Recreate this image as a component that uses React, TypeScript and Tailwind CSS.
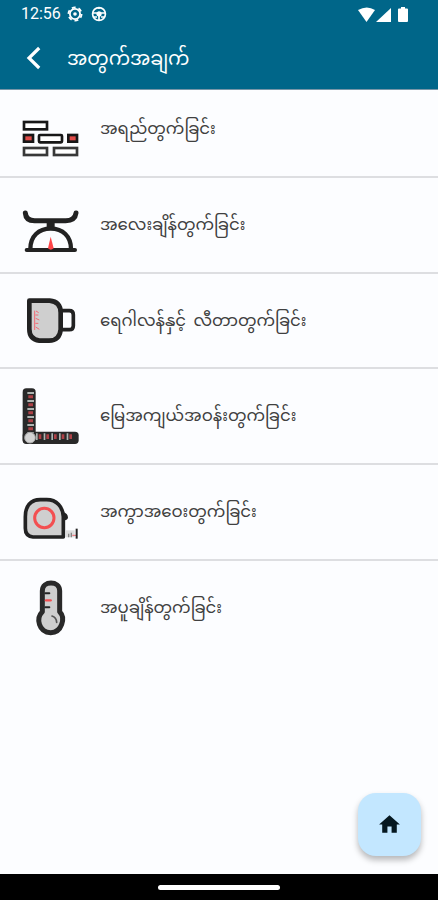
import React from "react"
import { MdHome } from "react-icons/md"

type RowType = {
  id: number
  label: string
  icon: React.ReactNode
  iconOffset: string
}

const BricksIcon = () => (
  <svg viewBox="0 0 240 210" className="w-20 h-[70px]" fill="#fff" stroke="#171717" strokeWidth="8">
    <rect x="42" y="51" width="69" height="22" />
    <rect x="42" y="90" width="27" height="20" fill="#e04b48" />
    <rect x="87" y="90" width="69" height="22" rx="3" />
    <rect x="175" y="90" width="26" height="20" fill="#e04b48" />
    <rect x="42" y="129" width="69" height="21" stroke="#383838" />
    <rect x="132" y="129" width="69" height="21" stroke="#383838" />
  </svg>
)

const ScaleIcon = () => (
  <svg viewBox="0 0 240 210" className="w-20 h-[70px]" fill="none" stroke="#222" strokeWidth="15" strokeLinecap="round" strokeLinejoin="round">
    <path d="M46 54C47 70 58 77 74 77H167C185 77 196 70 198 54" />
    <path d="M122 79V96" strokeWidth="24" strokeLinecap="butt" />
    <path d="M61 162C61 123 86 101 122 101S183 123 183 162" strokeWidth="13" />
    <path d="M50 165H195" strokeWidth="12" />
    <path d="M122 125L131 160Q122 168 114 160Z" fill="#ff4548" stroke="none" />
  </svg>
)

const CupIcon = () => (
  <svg viewBox="0 0 240 210" className="w-20 h-[70px]" fill="none" stroke="#222" strokeLinejoin="round">
    <path d="M149 77H178Q190 77 190 89V122Q190 134 178 134H149" strokeWidth="11" />
    <path d="M58 47H119Q152 50 152 83V133Q149 167 117 167H88Q58 163 58 132Z" fill="#cfcfcf" strokeWidth="14" />
    <path d="M74 77V135M78 78L86 83M76 90H85M77 100L88 105M76 115H85M77 126L88 133" stroke="#f26a74" strokeWidth="3" />
  </svg>
)

const RulerIcon = () => (
  <svg viewBox="0 0 240 210" className="w-20 h-[70px]" fill="none">
    <rect x="38" y="25" width="39" height="165" rx="11" fill="#292929" />
    <rect x="38" y="155" width="168" height="37" rx="11" fill="#292929" />
    <path d="M62 36V158" stroke="#aeb4b1" strokeWidth="20" strokeDasharray="6 18" />
    <path d="M62 46V155" stroke="#ad4146" strokeWidth="14" strokeDasharray="9 15" />
    <path d="M78 170H190" stroke="#aeb4b1" strokeWidth="20" strokeDasharray="5 18" />
    <path d="M86 170H190" stroke="#ad4146" strokeWidth="14" strokeDasharray="8 15" />
    <circle cx="60" cy="173" r="16" fill="#d3d3d3" stroke="#a6a6a6" strokeWidth="3" />
  </svg>
)

const TapeIcon = () => (
  <svg viewBox="0 0 240 210" className="w-20 h-[70px]" fill="none">
    <path d="M158 84Q174 88 174 101Q172 109 160 109Z" fill="#222" />
    <path d="M46 98C46 66 61 47 91 47H110C140 47 159 69 160 98V159H69Q46 157 46 133Z" fill="#cfcfcf" stroke="#222" strokeWidth="11" strokeLinejoin="round" />
    <circle cx="103" cy="102" r="29" stroke="#f34f51" strokeWidth="9" />
    <path d="M168 139H194V160H168Z" fill="#ddd" />
    <path d="M176 149V160M184 146V160" stroke="#858585" strokeWidth="4" />
    <path d="M187 154H198" stroke="#f26a74" strokeWidth="3" />
    <path d="M200 134V164" stroke="#222" strokeWidth="6" />
  </svg>
)

const ThermometerIcon = () => (
  <svg viewBox="0 0 240 210" className="w-20 h-[70px]" fill="none" strokeLinecap="round">
    <path d="M97 62C97 31 149 31 149 62V125C167 143 156 187 122 188C86 187 77 145 97 125Z" fill="#cecece" stroke="#292929" strokeWidth="15" strokeLinejoin="round" />
    <path d="M106 70H118M106 112H118" stroke="#252525" strokeWidth="6" />
    <path d="M108 91H122" stroke="#f34f51" strokeWidth="7" />
    <path d="M126 138Q139 142 140 157" stroke="#555" strokeWidth="5" />
  </svg>
)

const rows: RowType[] = [
  { id: 1, label: "အရည်တွက်ခြင်း", icon: <BricksIcon />, iconOffset: "mt-[23px]" },
  { id: 2, label: "အလေးချိန်တွက်ခြင်း", icon: <ScaleIcon />, iconOffset: "mt-[17px]" },
  { id: 3, label: "ရေဂါလန်နှင့် လီတာတွက်ခြင်း", icon: <CupIcon />, iconOffset: "mt-[11px]" },
  { id: 4, label: "မြေအကျယ်အဝန်းတွက်ခြင်း", icon: <RulerIcon />, iconOffset: "mt-[11px]" },
  { id: 5, label: "အကွာအဝေးတွက်ခြင်း", icon: <TapeIcon />, iconOffset: "mt-[19px]" },
  { id: 6, label: "အပူချိန်တွက်ခြင်း", icon: <ThermometerIcon />, iconOffset: "mt-[9px]" },
]

const StatusBar = () => (
  <div className="h-7 flex items-center pl-[21px] pr-[28px] text-white">
    <span className="font-['Roboto',sans-serif] text-[16px] leading-none w-[39px] whitespace-nowrap">12:56</span>
    <svg viewBox="0 0 16 16" className="size-4 ml-[7px]" fill="none" stroke="currentColor">
      <circle cx="8" cy="8" r="5.1" strokeWidth="1.8" />
      <circle cx="8" cy="8" r="6.6" strokeWidth="1.8" strokeDasharray="3.9 3.01" />
      <circle cx="8" cy="8" r="1.8" fill="currentColor" stroke="none" />
    </svg>
    <svg viewBox="0 0 16 16" className="size-4 ml-[8px]" fill="none" stroke="currentColor" strokeWidth="1.7">
      <circle cx="8" cy="8" r="6.4" />
      <path d="M2 7H14M8 8V14M3 11H6M10 11H13M8 1V3" />
      <circle cx="8" cy="8" r="1.8" fill="currentColor" />
    </svg>
    <svg viewBox="0 0 52 17" className="w-[52px] h-[17px] ml-auto" fill="currentColor">
      <path d="M0 4Q9 -1 17 4L8.5 16Z" />
      <path d="M33 2V16H18Z" />
      <path d="M43 1H47V2.5H49Q50 2.5 50 3.5V15Q50 16 49 16H41Q40 16 40 15V3.5Q40 2.5 41 2.5H43Z" />
    </svg>
  </div>
)

const App: React.FC = () => {
  return (
    <main className="relative w-full h-[900px] flex flex-col bg-[#fcfdff] overflow-hidden font-['Noto_Sans_Myanmar','Padauk','Noto_Sans',sans-serif]">
      <header className="h-[90px] shrink-0 bg-[#006689] border-b border-[#7896a8] text-white">
        <StatusBar />
        <div className="h-[60px] flex items-center pl-[26px]">
          <svg viewBox="0 0 16 24" className="w-4 h-6" fill="none" stroke="currentColor" strokeWidth="3.2">
            <path d="M13.2 2L3 12L13.2 22" />
          </svg>
          <h1 className="ml-[25px] pt-[6px] text-[19px] leading-[60px] whitespace-nowrap">အတွက်အချက်</h1>
        </div>
      </header>

      <ul className="flex-1 -mt-2 overflow-hidden pointer-events-none">
        {rows.map((row) => (
          <li key={row.id} className="h-[95.8px] flex items-start pl-[10px] border-b-2 border-[#dddee1] last:border-b-0">
            <div className={`shrink-0 ${row.iconOffset}`}>{row.icon}</div>
            <span className="ml-[10px] mt-[32px] text-[16.5px] leading-8 [word-spacing:3px] whitespace-nowrap text-[#404040]">
              {row.label}
            </span>
          </li>
        ))}
      </ul>

      <footer className="h-[26px] shrink-0 bg-black flex items-center justify-center">
        <div className="w-[122px] h-[5px] rounded-full bg-white" />
      </footer>

      <button
        aria-label="Home"
        className="absolute right-[17px] bottom-[44px] w-[63px] h-[63px] rounded-[18px] bg-[#c3e7ff] text-[#061820] flex items-center justify-center shadow-[0_4px_6px_rgba(0,0,0,0.28)]"
      >
        <MdHome className="size-[25px]" />
      </button>
    </main>
  )
}

export default App
